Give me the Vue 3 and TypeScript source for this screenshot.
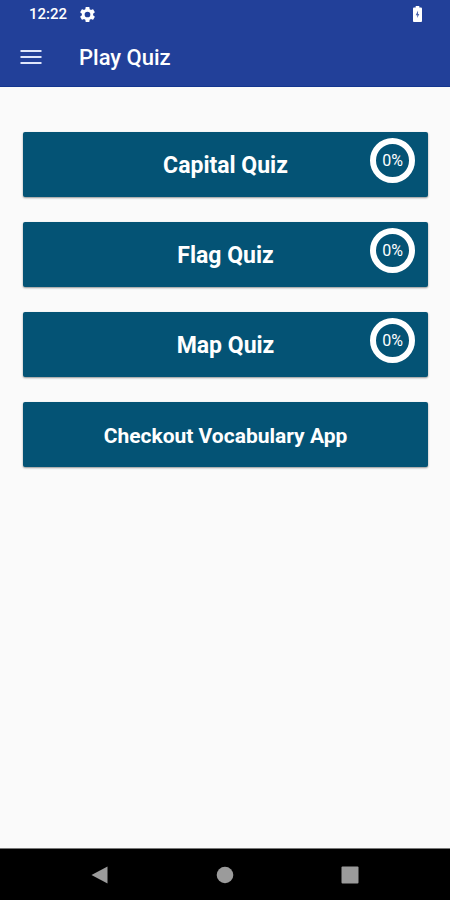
<script setup lang="ts">
interface QuizItem {
  label: string
  progress: number
}

const quizzes: QuizItem[] = [
  { label: 'Capital Quiz', progress: 0 },
  { label: 'Flag Quiz', progress: 0 },
  { label: 'Map Quiz', progress: 0 },
]
</script>

<template>
  <div class="screen">
    <header class="top">
      <div class="status">
        <span class="time">12:22</span>
        <svg class="gear" viewBox="2 2 20 20" aria-hidden="true">
          <path
            fill="#fff"
            fill-rule="evenodd"
            d="M19.43 12.98c.04-.32.07-.64.07-.98s-.03-.66-.07-.98l2.11-1.65c.19-.15.24-.42.12-.64l-2-3.46c-.12-.22-.39-.3-.61-.22l-2.49 1c-.52-.4-1.08-.73-1.69-.98l-.38-2.65C14.46 2.18 14.25 2 14 2h-4c-.25 0-.46.18-.49.42l-.38 2.65c-.61.25-1.17.59-1.69.98l-2.49-1c-.23-.09-.49 0-.61.22l-2 3.46c-.13.22-.07.49.12.64l2.11 1.65c-.04.32-.07.65-.07.98s.03.66.07.98l-2.11 1.65c-.19.15-.24.42-.12.64l2 3.46c.12.22.39.3.61.22l2.49-1c.52.4 1.08.73 1.69.98l.38 2.65c.03.24.24.42.49.42h4c.25 0 .46-.18.49-.42l.38-2.65c.61-.25 1.17-.59 1.69-.98l2.49 1c.23.09.49 0 .61-.22l2-3.46c.12-.22.07-.49-.12-.64l-2.11-1.65zM12 15.8a3.800 3.800 0 1 1 0-7.600a3.800 3.800 0 0 1 0 7.600z"
          />
        </svg>
        <svg class="battery" viewBox="7 2 10 20" preserveAspectRatio="none" aria-hidden="true">
          <path
            fill="#fff"
            d="M15.67 4H14V2h-4v2H8.33C7.6 4 7 4.6 7 5.33v15.33C7 21.4 7.6 22 8.33 22h7.33c.74 0 1.34-.6 1.34-1.33V5.33C17 4.6 16.4 4 15.67 4z"
          />
          <path fill="#224099" opacity="0.8" d="M11.700 17v-3.500H10L12.600 7.500v4.500H14z" />
        </svg>
      </div>
      <div class="appbar">
        <button class="menu" type="button" aria-label="Menu">
          <svg viewBox="0 0 22 16" aria-hidden="true">
            <path stroke="#dfe6fb" stroke-width="2" d="M0.500 2h21M0.500 8h21M0.500 14h21" />
          </svg>
        </button>
        <h1 class="title">Play Quiz</h1>
      </div>
    </header>

    <main class="list">
      <button v-for="quiz in quizzes" :key="quiz.label" class="card" type="button">
        {{ quiz.label }}
        <span class="ring">{{ quiz.progress }}%</span>
      </button>
      <button class="card card-link" type="button">Checkout Vocabulary App</button>
    </main>

    <nav class="navbar">
      <button type="button" aria-label="Back">
        <svg viewBox="0 0 18 18"><path fill="#9b9b9b" d="M16.500 0.500v17L0.500 9z" /></svg>
      </button>
      <button type="button" aria-label="Home">
        <svg viewBox="0 0 18 18"><circle cx="9" cy="9" r="8.300" fill="#9b9b9b" /></svg>
      </button>
      <button type="button" aria-label="Recent apps">
        <svg viewBox="0 0 18 18"><rect x="0.500" y="0.500" width="17" height="17" rx="1" fill="#9b9b9b" /></svg>
      </button>
    </nav>
  </div>
</template>

<style>
body {
  margin: 0;
  background: #fafafa;
}
</style>

<style scoped>
.screen {
  display: flex;
  flex-direction: column;
  min-height: 100vh;
  background: #fafafa;
  font-family: Roboto, 'Liberation Sans', sans-serif;
  color: #fff;
}

button {
  border: 0;
  padding: 0;
  background: none;
  color: inherit;
  font-family: inherit;
}

svg {
  display: block;
}

.top {
  background: #224099;
  border-bottom: 1px solid #14368f;
}

.status {
  display: flex;
  align-items: center;
  height: 28px;
  padding: 0 28px 0 29px;
}

.time {
  font-size: 15px;
  line-height: 28px;
  font-weight: 500;
}

.gear {
  width: 15px;
  height: 15px;
  margin-left: 13px;
}

.battery {
  width: 9px;
  height: 16px;
  margin-left: auto;
}

.appbar {
  display: flex;
  align-items: center;
  height: 58px;
  padding: 0 20px;
}

.menu svg {
  width: 22px;
  height: 16px;
}

.title {
  margin: 0 0 0 37px;
  padding-top: 2px;
  font-size: 22px;
  line-height: 28px;
  font-weight: 500;
}

.list {
  flex: 1;
  display: flex;
  flex-direction: column;
  gap: 25px;
  padding: 45px 22px 24px 23px;
}

.card {
  position: relative;
  height: 65px;
  padding-top: 2px;
  border-radius: 2px;
  background: #045375;
  box-shadow: 0 1px 2px rgba(0, 0, 0, 0.4);
  font-size: 23px;
  line-height: 28px;
  font-weight: 700;
}

.card-link {
  font-size: 21px;
}

.ring {
  position: absolute;
  top: 6px;
  right: 13px;
  box-sizing: border-box;
  width: 45px;
  height: 45px;
  border: 6px solid #fff;
  border-radius: 50%;
  font-size: 16px;
  line-height: 33px;
  font-weight: 400;
}

.navbar {
  display: flex;
  justify-content: center;
  gap: 107px;
  height: 51px;
  background: #000;
  border-top: 1px solid #777;
}

.navbar svg {
  width: 18px;
  height: 18px;
}
</style>
